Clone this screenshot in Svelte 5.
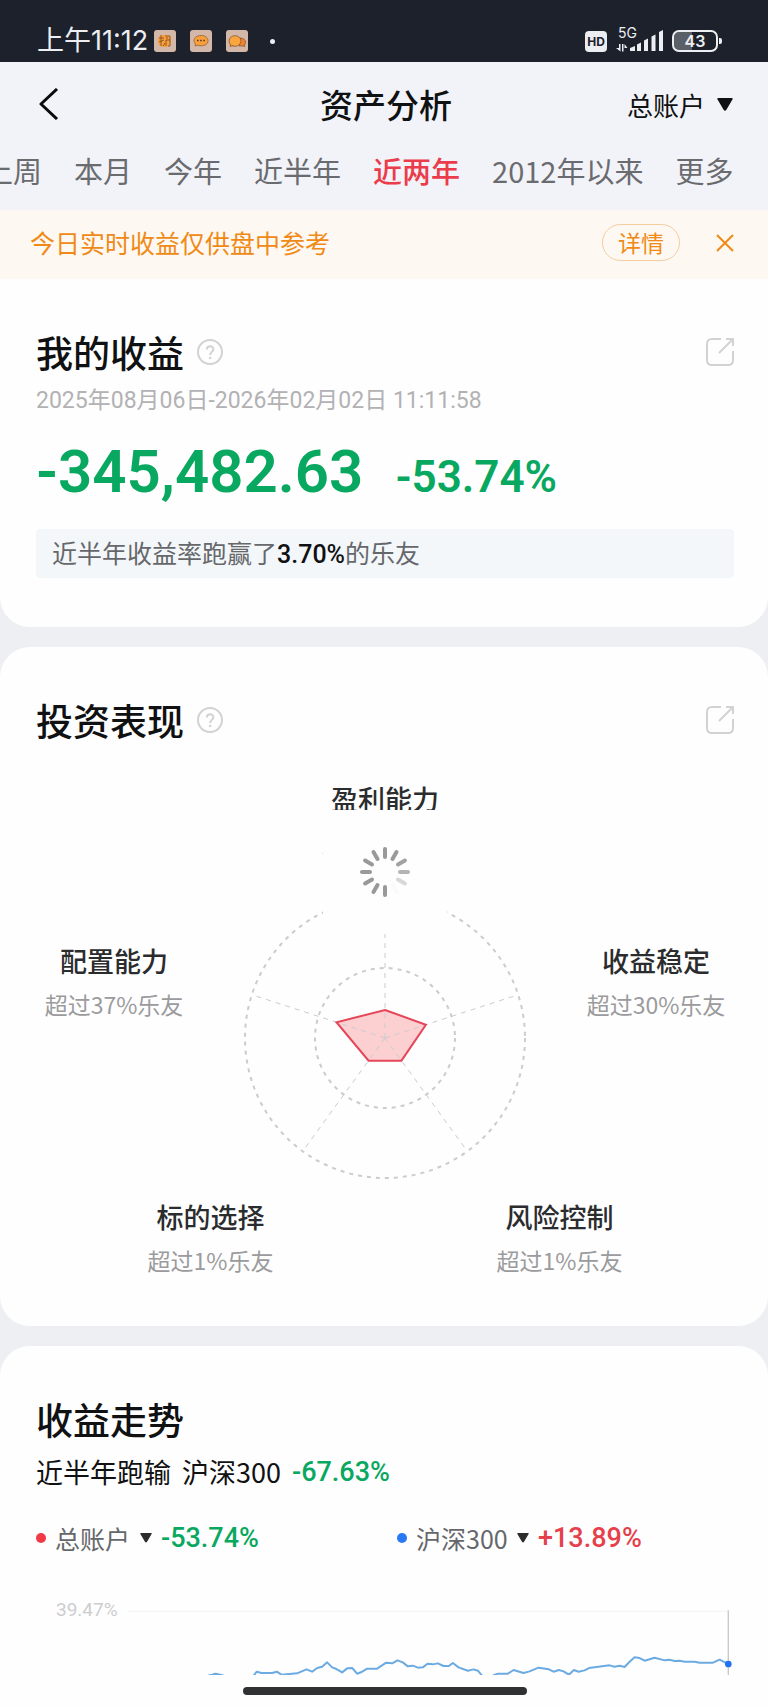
<script>
  let account = '总账户';
  let compared = '沪深300';
  let activeTab = '近两年';
  let showNotice = true;

  const tabs = ['上周', '本月', '今年', '近半年', '近两年', '2012年以来', '更多'];

  const abilities = {
    profit: { name: '盈利能力', percent: 1 },
    allocation: { name: '配置能力', percent: 37 },
    stability: { name: '收益稳定', percent: 30 },
    selection: { name: '标的选择', percent: 1 },
    risk: { name: '风险控制', percent: 1 }
  };

  // radar geometry, clockwise from the top
  const radius = 140;
  const scores = [28, 43, 28, 28, 51];

  function spoke(index, length) {
    const angle = (index * 72 - 90) * Math.PI / 180;
    return [142 + length * Math.cos(angle), 142 + length * Math.sin(angle)];
  }

  const spokes = scores.map((_, i) => spoke(i, radius));
  const shape = scores.map((score, i) => spoke(i, score).join(',')).join(' ');

  // spinner bars, clockwise from the top
  const bars = ['#999', '#999', '#a2a2a2', '#b4b4b4', '#d8d8d8', '#fafafa', '#999', '#999', '#999', '#999', '#999', '#999'];

  const trend = [
    '241,226 252,224 262,221 273,223 286,226',
    '377,226 386,215 400,219 432,219 446,215 460,224 507,220 535,208 552,215 567,204 582,200 597,187 612,202 625,207 642,217 657,205 672,204 687,221 702,215 717,206 747,206 774,188 792,190 808,181 824,187 839,199 854,197 869,203 884,202 898,191 914,193 929,190 946,198 962,198 974,189 991,202 1019,212 1036,208 1049,212 1061,226',
    '1094,226 1109,221 1139,221 1156,210 1186,219 1204,214 1231,203 1262,208 1276,215 1292,210 1306,214 1322,224 1337,210 1351,215 1369,211 1382,204 1444,196 1459,200 1474,197 1489,201 1504,185 1519,172 1534,174 1549,182 1579,173 1609,181 1624,179 1639,183 1654,182 1669,185 1699,185 1714,188 1754,188 1774,179 1800,192'
  ];
</script>

{#snippet caret()}
  <svg class="caret" viewBox="0 0 16 13" aria-hidden="true">
    <path d="M1.5 0h13q2 0 .8 1.8L9.4 11.7q-1.4 2-2.8 0L.7 1.8Q-.5 0 1.5 0z" fill="currentColor" />
  </svg>
{/snippet}

{#snippet cardHead(title, help)}
  <div class="card-head">
    <h2>{title}</h2>
    {#if help}
      <button class="icon" aria-label="说明">
        <svg width="26" height="26" viewBox="0 0 26 26" fill="none" stroke="#d2d2d2" stroke-width="2">
          <circle cx="13" cy="13" r="12" />
          <path d="M9.8 10.6c0-4.6 6.6-4.4 6.6-.4 0 2.500-3.300 2.900-3.300 5.800" />
          <circle cx="13.1" cy="19" r="1.300" fill="#d2d2d2" stroke="none" />
        </svg>
      </button>
      <button class="icon share" aria-label="分享">
        <svg width="28" height="28" viewBox="0 0 28 28" fill="none" stroke="#d2d2d2" stroke-width="2">
          <path d="M15 1H6Q1 1 1 6v16q0 5 5 5h16q5 0 5-5v-9M13 15 26.500 1.500M20 1h7v7" />
        </svg>
      </button>
    {/if}
  </div>
{/snippet}

{#snippet ability(item)}
  <div class="ability">
    <h3>{item.name}</h3>
    <p>超过{item.percent}%乐友</p>
  </div>
{/snippet}

<div class="page">
  <div class="status">
    <span class="time">上午11:12</span>
    <svg class="app" viewBox="0 0 22 22">
      <rect width="22" height="22" rx="3" fill="#d3b8aa" />
      <rect x="4" y="5" width="13" height="12" rx="5" fill="#f7a03c" />
      <path d="M5 8h5M7 5v11M5 12l5-2M11 6h5v4h-4v6M16 10v6h-2M9 16l2-3M13 7v2" fill="none" stroke="#7b481f" stroke-width=".8" />
    </svg>
    <svg class="app" viewBox="0 0 22 22">
      <rect width="22" height="22" rx="3" fill="#d3b8aa" />
      <path d="M11 5.500c4.300 0 7 2.200 7 5.200s-2.700 5.100-7 5.100q-2 0-3.500-.6L5 16l.6-2C4.500 13 4 12 4 10.700c0-3 2.700-5.200 7-5.200z" fill="#f7a03c" stroke="#8a5428" stroke-width=".7" />
      <path d="M7 10.500h1.600M10.200 10.500h1.600M13.400 10.500H15" stroke="#5c3519" stroke-width="1.500" />
    </svg>
    <svg class="app" viewBox="0 0 22 22">
      <rect width="22" height="22" rx="3" fill="#d3b8aa" />
      <path d="M14 8c3.500 0 5.500 2 5.500 4.300 0 1.200-.5 2-1.200 2.700l.3 1.600-2-.7H13z" fill="#ee8636" stroke="#7d4a22" stroke-width=".7" />
      <ellipse cx="9" cy="11" rx="6" ry="5.300" fill="#f9a640" stroke="#7d4a22" stroke-width=".7" />
      <path d="m4.500 14-.4 2.500 3-1" fill="#f9a640" stroke="#7d4a22" stroke-width=".7" />
    </svg>
    <span class="dot"></span>
    <span class="hd">HD</span>
    <span class="network">
      <span>5G</span>
      <svg width="47" height="22" viewBox="0 0 47 22" fill="#eceef1">
        <path d="M3 14h1.500v7.500L0 18h3zM6 21.500V14h1.500v7.500zM8.500 14l3 4h-3z" />
        <path d="M14 21v-3l5-2v5zM21 14.500l4-2V21h-4zM28 10.500l4-2V21h-4zM35.500 6.500l4-2V21h-4zM43 2l4-2v21h-4z" />
      </svg>
    </span>
    <span class="battery">43</span>
  </div>

  <header>
    <div class="nav">
      <button class="icon" aria-label="返回">
        <svg width="20" height="32" viewBox="0 0 20 32" fill="none" stroke="#0b0b0c" stroke-width="3">
          <path d="M18 1 2 16l16 15" stroke-linejoin="round" />
        </svg>
      </button>
      <h1>资产分析</h1>
      <label class="account">
        <select bind:value={account} aria-label="账户">
          <option>总账户</option>
        </select>
        {@render caret()}
      </label>
    </div>
    <nav class="tabs">
      {#each tabs as tab (tab)}
        <button class:active={tab === activeTab} on:click={() => activeTab = tab}>{tab}</button>
      {/each}
    </nav>
  </header>

  {#if showNotice}
    <div class="notice">
      <span>今日实时收益仅供盘中参考</span>
      <button class="detail">详情</button>
      <button class="icon" aria-label="关闭" on:click={() => showNotice = false}>
        <svg width="18" height="18" viewBox="0 0 18 18" stroke="#f08a16" stroke-width="2">
          <path d="M1 1l16 16M17 1 1 17" />
        </svg>
      </button>
    </div>
  {/if}

  <main>
    <section class="card first">
      {@render cardHead('我的收益', true)}
      <p class="period">2025年08月06日-2026年02月02日 11:11:58</p>
      <p class="profit down">
        <strong>-345,482.63</strong>
        <span>-53.74%</span>
      </p>
      <p class="rank">近半年收益率跑赢了<b>3.70%</b>的乐友</p>
    </section>

    <section class="card">
      {@render cardHead('投资表现', true)}
      <div class="radar">
        {@render ability(abilities.profit)}
        <div class="middle">
          {@render ability(abilities.allocation)}
          <svg width="284" height="284" viewBox="0 0 284 284" fill="none">
            <polygon points={shape} fill="#fccfd1" />
            <g stroke="#cbcbd0" stroke-dasharray="5 5">
              {#each spokes as [x, y]}
                <line x1="142" y1="142" x2={x} y2={y} stroke-width="1" />
              {/each}
              <circle cx="142" cy="142" r="70" stroke-width="2" stroke-dasharray="4 5" />
              <circle cx="142" cy="142" r={radius} stroke-width="2" stroke-dasharray="4 5" />
            </g>
            <polygon points={shape} stroke="#e5475a" stroke-width="2" />
          </svg>
          {@render ability(abilities.stability)}
        </div>
        <div class="bottom">
          {@render ability(abilities.selection)}
          {@render ability(abilities.risk)}
        </div>
        <div class="loading">
          <svg width="52" height="52" viewBox="-26 -26 52 52" stroke-width="4" stroke-linecap="round">
            {#each bars as color, i}
              <line y1="-15" y2="-23" stroke={color} transform="rotate({i * 30})" />
            {/each}
          </svg>
        </div>
      </div>
    </section>

    <section class="card last">
      {@render cardHead('收益走势', false)}
      <p class="versus">
        <span>近半年跑输</span>
        <span>沪深300</span>
        <b class="down">-67.63%</b>
      </p>
      <div class="legend">
        <label>
          <i class="mark red"></i>
          <select bind:value={account} aria-label="账户">
            <option>总账户</option>
          </select>
          {@render caret()}
          <b class="down">-53.74%</b>
        </label>
        <label>
          <i class="mark blue"></i>
          <select bind:value={compared} aria-label="对比指数">
            <option>沪深300</option>
          </select>
          {@render caret()}
          <b class="up">+13.89%</b>
        </label>
      </div>
      <div class="chart">
        <span>39.47%</span>
        <svg viewBox="0 0 1818 225" fill="none">
          <line x1="0" y1="34" x2="1800" y2="34" stroke="#f2f2f3" stroke-width="3" />
          <line x1="1800" y1="31" x2="1800" y2="225" stroke="#c9c9cb" stroke-width="4" />
          {#each trend as points}
            <polyline {points} stroke="#6cabe2" stroke-width="6" stroke-linejoin="round" />
          {/each}
          <circle cx="1800" cy="192" r="10" fill="#2272f0" />
        </svg>
      </div>
      <div class="home"></div>
    </section>
  </main>
</div>

<style>
  :global(body) {
    margin: 0;
    background: #fefefe;
  }

  .page {
    background: #eeeff3;
    color: #101112;
    font-family: "Noto Sans CJK SC", sans-serif;
    overflow: hidden;
  }

  h1, h2, h3, p {
    margin: 0;
    font-weight: 500;
  }

  button, select {
    margin: 0;
    padding: 0;
    border: 0;
    background: none;
    color: inherit;
    font: inherit;
    appearance: none;
    white-space: nowrap;
    cursor: pointer;
  }

  svg {
    display: block;
    flex-shrink: 0;
  }

  .icon {
    display: flex;
  }

  .down {
    color: #09a860;
  }

  .up {
    color: #e5404c;
  }

  .status {
    display: flex;
    align-items: center;
    height: 42px;
    padding: 20px 50px 0 37px;
    background: #1c212c;
    color: #eceef1;
    font-family: Inter, "Noto Sans CJK SC", sans-serif;
  }

  .time {
    margin-right: 6px;
    font-size: 27px;
    line-height: 40px;
  }

  .app {
    width: 22px;
    margin-right: 14px;
  }

  .dot {
    width: 5px;
    height: 5px;
    margin-left: 8px;
    border-radius: 50%;
    background: #eceef1;
  }

  .hd {
    width: 22px;
    margin-left: auto;
    border-radius: 4px;
    background: #eceef1;
    color: #1c212c;
    font-size: 12px;
    font-weight: 700;
    line-height: 21px;
    text-align: center;
  }

  .network {
    display: grid;
    margin: 0 9px;
  }

  .network > * {
    grid-area: 1 / 1;
  }

  .network span {
    padding-left: 2px;
    font-size: 14px;
    line-height: 6px;
  }

  .battery {
    position: relative;
    width: 42px;
    border: 2px solid #eceef1;
    border-radius: 7px;
    background: linear-gradient(90deg, #5b5f67 43%, transparent 43%) content-box;
    font-size: 16px;
    font-weight: 600;
    line-height: 18px;
    text-align: center;
  }

  .battery::after {
    content: "";
    position: absolute;
    top: 6px;
    right: -6px;
    width: 3px;
    height: 6px;
    border-radius: 0 2px 2px 0;
    background: #eceef1;
  }

  header {
    background: #f2f3f8;
  }

  .nav {
    display: grid;
    grid-template-columns: 1fr auto 1fr;
    align-items: center;
    height: 84px;
    padding: 0 35px 0 39px;
  }

  h1 {
    font-size: 33px;
    line-height: 48px;
  }

  .account {
    display: flex;
    align-items: center;
    justify-content: flex-end;
    gap: 11px;
    font-size: 26px;
  }

  .caret {
    width: 16px;
  }

  .tabs {
    display: flex;
    gap: 32px;
    margin-left: -16px;
    padding-bottom: 16px;
    color: #6a6b6f;
    font-size: 29px;
    line-height: 48px;
  }

  .tabs .active {
    color: #ea3c4b;
    font-weight: 500;
  }

  .notice {
    display: flex;
    align-items: center;
    padding: 14px 34px 18px 30px;
    background: #fef8f2;
    color: #f08a16;
    font-size: 25px;
    line-height: 37px;
  }

  .detail {
    margin: 0 36px 0 auto;
    padding: 0 15px;
    border: 1px solid #f3cd9f;
    border-radius: 19px;
    font-size: 23px;
    line-height: 35px;
  }

  main {
    display: grid;
    gap: 20px;
  }

  .card {
    padding: 49px 34px 44px 36px;
    border-radius: 30px;
    background: #fefefe;
  }

  .first {
    padding-bottom: 49px;
    border-radius: 0 0 30px 30px;
  }

  .last {
    padding-bottom: 12px;
    border-radius: 30px 30px 0 0;
  }

  .card-head {
    display: flex;
    align-items: center;
    gap: 13px;
  }

  h2 {
    font-size: 37px;
    line-height: 48px;
  }

  .share {
    margin-left: auto;
  }

  .period {
    margin-top: 9px;
    color: #b2b2b4;
    font-family: Roboto, "Noto Sans CJK SC", sans-serif;
    font-size: 23px;
    font-weight: 400;
    line-height: 32px;
  }

  .profit {
    display: flex;
    align-items: baseline;
    gap: 32px;
    margin-top: 23px;
    font-family: Roboto, sans-serif;
    font-size: 44px;
    font-weight: 600;
    line-height: 48px;
  }

  .profit strong {
    font-size: 60px;
    font-weight: 600;
    line-height: 64px;
  }

  .rank {
    margin-top: 25px;
    padding: 0 16px;
    border-radius: 4px;
    background: #f3f7fa;
    color: #66676b;
    font-size: 25px;
    font-weight: 400;
    line-height: 46px;
  }

  .rank b {
    color: #101112;
    font-family: Roboto, sans-serif;
    font-weight: 500;
  }

  .radar {
    position: relative;
    margin-top: 34px;
  }

  .ability {
    text-align: center;
  }

  h3 {
    color: #2b2c2e;
    font-size: 27px;
    line-height: 42px;
  }

  .ability p {
    color: #9b9b9d;
    font-size: 23px;
    font-weight: 400;
    line-height: 44px;
  }

  .middle {
    display: flex;
    justify-content: space-between;
    margin-top: 32px;
  }

  .middle .ability {
    width: 156px;
    padding-top: 44px;
  }

  .bottom {
    display: grid;
    grid-template-columns: 1fr 1fr;
    margin-top: 16px;
  }

  .loading {
    position: absolute;
    top: 32px;
    left: 50%;
    display: grid;
    place-items: center;
    width: 124px;
    height: 124px;
    background: #fefefe;
    transform: translateX(-50%);
  }

  .versus {
    display: flex;
    gap: 11px;
    margin-top: 11px;
    font-size: 27px;
    font-weight: 400;
    line-height: 36px;
  }

  .versus b, .legend b {
    font-family: Roboto, sans-serif;
    font-size: 27px;
    font-weight: 500;
  }

  .legend {
    display: grid;
    grid-template-columns: 15fr 14fr;
    margin-top: 30px;
    color: #66676b;
    font-size: 25px;
    line-height: 36px;
  }

  .legend label {
    display: flex;
    align-items: center;
    gap: 9px;
  }

  .legend .caret {
    width: 12px;
    color: #2b2c2e;
  }

  .mark {
    width: 10px;
    height: 10px;
    border-radius: 50%;
  }

  .red {
    background: #f03a45;
  }

  .blue {
    background: #2b78f6;
  }

  .chart {
    display: flex;
    gap: 10px;
    margin-top: 44px;
    padding-left: 20px;
    color: #cdcdcf;
    font-family: Roboto, sans-serif;
    font-size: 19px;
    line-height: 20px;
  }

  .chart svg {
    flex: 1;
    min-width: 0;
    overflow: hidden;
  }

  .home {
    width: 284px;
    height: 8px;
    margin: 12px auto 0;
    border-radius: 4px;
    background: #303133;
  }
</style>
